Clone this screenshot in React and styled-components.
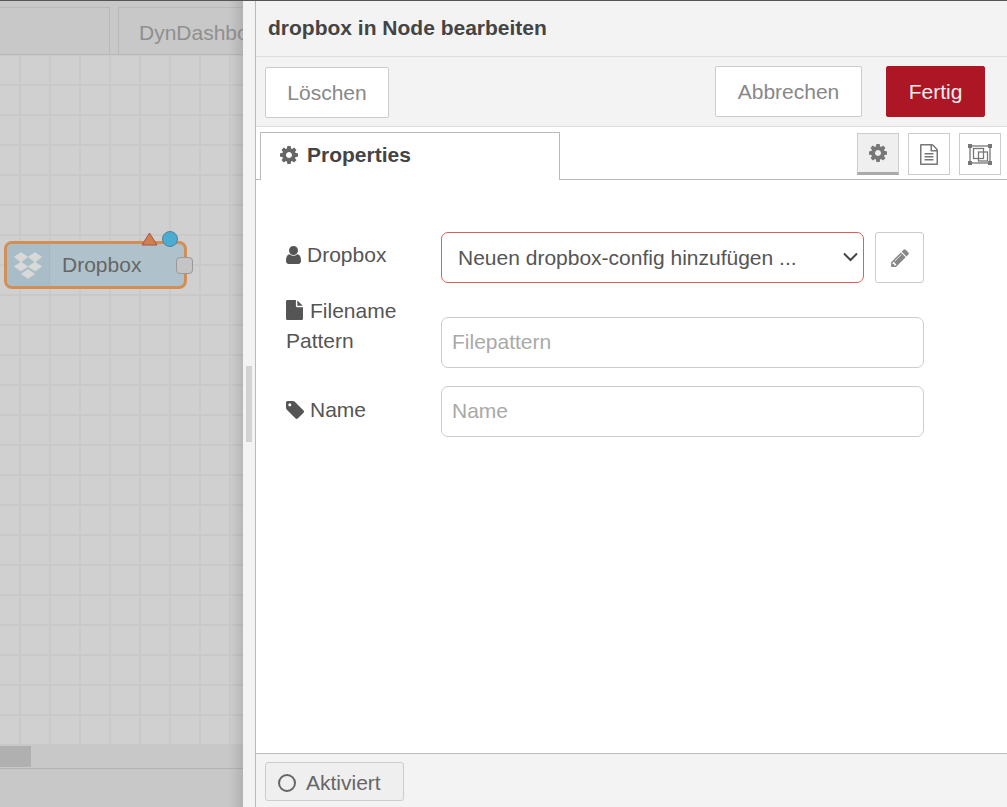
import React from 'react';
import styled, { createGlobalStyle } from 'styled-components';

const GlobalStyle = createGlobalStyle`
  html, body { margin: 0; padding: 0; height: 100%; overflow: hidden; }
  #root { height: 100%; }
  * { box-sizing: border-box; }
  body { font-family: "Liberation Sans", Arial, sans-serif; color: #555; }
`;

// font awesome 4 glyphs
const ICONS = {
  cog: ['128 128 1536 1536', 'M1152 896q0-106-75-181t-181-75-181 75-75 181 75 181 181 75 181-75 75-181zm512-109v222q0 12-8 23t-20 13l-185 28q-19 54-39 91 35 50 107 138 10 12 10 25t-9 23q-27 37-99 108t-94 71q-12 0-26-9l-138-108q-44 23-91 38-16 136-29 186-7 28-36 28h-222q-14 0-24.500-8.500t-11.500-21.500l-28-184q-49-16-90-37l-141 107q-10 9-25 9-14 0-25-11-126-114-165-168-7-10-7-23 0-12 8-23 15-21 51-66.500t54-70.500q-27-50-41-99l-183-27q-13-2-21-12.500t-8-23.500v-222q0-12 8-23t19-13l186-28q14-46 39-92-40-57-107-138-10-12-10-24 0-10 9-23 26-36 98.500-107.500t94.500-71.500q13 0 26 10l138 107q44-23 91-38 16-136 29-186 7-28 36-28h222q14 0 24.500 8.500t11.500 21.500l28 184q49 16 90 37l142-107q9-9 24-9 13 0 25 10 129 119 165 170 7 8 7 22 0 12-8 23-15 21-51 66.500t-54 70.500q26 50 41 98l183 28q13 2 21 12.500t8 23.500z'],
  user: ['256 128 1280 1536', 'M1536 1399q0 109-62.500 187t-150.500 78h-854q-88 0-150.500-78t-62.500-187q0-85 8.500-160.500t31.500-152 58.500-131 94-89 134.500-34.500q131 128 313 128t313-128q76 0 134.500 34.500t94 89 58.500 131 31.500 152 8.500 160.500zm-256-887q0 159-112.500 271.500t-271.500 112.500-271.500-112.500-112.500-271.500 112.500-271.500 271.500-112.500 271.500 112.500 112.500 271.500z'],
  file: ['128 0 1536 1792', 'M1152 512v-472q22 14 36 28l408 408q14 14 28 36h-472zm-128 32q0 40 28 68t68 28h544v1056q0 40-28 68t-68 28h-1344q-40 0-68-28t-28-68v-1600q0-40 28-68t68-28h800v544z'],
  tag: ['128 128 1515 1515', 'M576 448q0-53-37.500-90.500t-90.500-37.500-90.500 37.500-37.500 90.500 37.500 90.500 90.500 37.500 90.500-37.500 37.500-90.500zm1067 576q0 53-37 90l-491 492q-39 37-91 37-53 0-90-37l-715-716q-38-37-64.500-101t-26.500-117v-416q0-52 38-90t90-38h416q53 0 117 26.500t102 64.500l715 714q37 39 37 91z'],
  pencil: ['128 128 1515 1536', 'M491 1536l91-91-235-235-91 91v107h128v128h107zm523-928q0-22-22-22-10 0-17 7l-542 542q-7 7-7 17 0 22 22 22 10 0 17-7l542-542q7-7 7-17zm-54-192l416 416-832 832h-416v-416zm683 96q0 53-37 90l-166 166-416-416 166-165q36-38 90-38 53 0 91 38l235 234q37 39 37 91z'],
  fileText: ['128 0 1536 1792', 'M1596 380q28 28 48 76t20 88v1152q0 40-28 68t-68 28h-1344q-40 0-68-28t-28-68v-1600q0-40 28-68t68-28h896q40 0 88 20t76 48zm-444-244v376h376q-10-29-22-41l-313-313q-12-12-41-22zm384 1528v-1024h-416q-40 0-68-28t-28-68v-416h-768v1536h1280zm-1024-864q0-14 9-23t23-9h704q14 0 23 9t9 23v64q0 14-9 23t-23 9h-704q-14 0-23-9t-9-23v-64zm736 224q14 0 23 9t9 23v64q0 14-9 23t-23 9h-704q-14 0-23-9t-9-23v-64q0-14 9-23t23-9h704zm0 256q14 0 23 9t9 23v64q0 14-9 23t-23 9h-704q-14 0-23-9t-9-23v-64q0-14 9-23t23-9h704z'],
};

const Glyph = styled.svg`
  flex: none;
  fill: currentColor;
  margin-right: ${p => p.$gap || 0}px;
`;

const Icon = ({ name, w, h, gap }) => (
  <Glyph width={w} height={h} viewBox={ICONS[name][0]} $gap={gap}>
    <path d={ICONS[name][1]} />
  </Glyph>
);

const Page = styled.div`
  display: flex;
  width: 1007px;
  height: 807px;
  border-top: 1px solid #555;
  overflow: hidden;
`;

const Workspace = styled.div`
  position: relative;
  width: 243px;
  flex: none;
  display: flex;
  flex-direction: column;
  background: #c8c8c8;
  overflow: hidden;
  &::after {
    content: '';
    position: absolute;
    top: 0;
    right: 0;
    bottom: 0;
    width: 14px;
    background: linear-gradient(to right, rgba(120, 120, 120, 0), rgba(120, 120, 120, 0.28));
  }
`;

const TabBar = styled.div`
  height: 54px;
  padding-top: 6px;
  display: flex;
  gap: 8px;
  border-bottom: 1px solid #b9b9b9;
  overflow: hidden;
`;

const WorkTab = styled.div`
  flex: none;
  width: ${p => p.$width}px;
  height: 47px;
  border: 1px solid #b9b9b9;
  border-bottom: 0;
  border-left-width: ${p => (p.$cut ? 0 : 1)}px;
  padding: 13px 0 0 20px;
  font-size: 21px;
  color: #8f8f8f;
  white-space: nowrap;
`;

const Canvas = styled.div`
  position: relative;
  flex: 1;
  background-color: #d0d0d0;
  background-image:
    linear-gradient(to right, #c9c9c9 2px, transparent 2px),
    linear-gradient(to bottom, #c9c9c9 2px, transparent 2px);
  background-size: 30px 30px;
  background-position: 19px 29px;
`;

const ScrollTrack = styled.div`
  height: 25px;
  padding: 2px 0 1px;
  background: #c8c8c8;
  border-bottom: 1px solid #b2b2b2;
`;

const ScrollThumb = styled.div`
  width: 31px;
  height: 100%;
  background: #b0b0b0;
`;

const WorkFooter = styled.div`
  height: 38px;
`;

const Node = styled.div`
  position: absolute;
  left: 4px;
  top: 186px;
  width: 183px;
  height: 48px;
  display: flex;
  background: #afc2cc;
  border: 3px solid #d18f55;
  border-radius: 8px;
`;

const NodeIcon = styled.div`
  width: 43px;
  flex: none;
  display: flex;
  align-items: center;
  justify-content: center;
  background: #a9bdc8;
  border-right: 1px solid #a5b8c2;
  border-radius: 5px 0 0 5px;
`;

const NodeLabel = styled.div`
  flex: 1;
  padding: 9px 0 0 12px;
  font-size: 21px;
  color: #666;
`;

const NodePort = styled.div`
  position: absolute;
  right: -9px;
  top: 13px;
  width: 17px;
  height: 17px;
  background: #c4c4c4;
  border: 1px solid #999;
  border-radius: 4px;
`;

const NodeBadge = styled.svg`
  position: absolute;
  right: 26px;
  top: -12px;
`;

const NodeDot = styled.div`
  position: absolute;
  right: 6px;
  top: -13px;
  width: 16px;
  height: 16px;
  border-radius: 50%;
  background: #4bacd2;
  border: 1px solid #4f8296;
`;

const Tray = styled.div`
  flex: 1;
  display: flex;
  min-width: 0;
`;

const Handle = styled.div`
  width: 13px;
  flex: none;
  display: flex;
  align-items: center;
  background: #f3f3f3;
  border-right: 1px solid #bbb;
`;

const Grip = styled.div`
  width: 6px;
  height: 76px;
  margin-left: 3px;
  background: #d2d2d2;
`;

const TrayBody = styled.div`
  flex: 1;
  display: flex;
  flex-direction: column;
  min-width: 0;
  background: #fff;
`;

const TrayTitle = styled.div`
  height: 56px;
  padding: 15px 0 0 12px;
  font-size: 21px;
  font-weight: 700;
  color: #444;
  background: #f3f3f3;
  border-bottom: 1px solid #ddd;
`;

const Toolbar = styled.div`
  height: 70px;
  padding: 9px 22px 0 9px;
  display: flex;
  align-items: flex-start;
  background: #f3f3f3;
  border-bottom: 1px solid #ddd;
`;

const Button = styled.button`
  height: 51px;
  width: ${p => p.$width}px;
  margin-left: ${p => p.$left || 0}px;
  margin-top: ${p => p.$top || 0}px;
  padding: 0;
  font: inherit;
  font-size: 21px;
  color: ${p => (p.$primary ? '#eee' : '#888')};
  background: ${p => (p.$primary ? '#ad1625' : '#fff')};
  border: 1px solid ${p => (p.$primary ? '#ad1625' : '#ccc')};
  border-radius: 2px;
`;

const TabStrip = styled.div`
  height: 53px;
  padding: 5px 6px 0 4px;
  display: flex;
  background: #fff;
  border-bottom: 1px solid #bbb;
`;

const TabMain = styled.div`
  width: 300px;
  height: 48px;
  padding: 0 0 4px 19px;
  display: flex;
  align-items: center;
  gap: 9px;
  font-size: 21px;
  font-weight: 700;
  color: #444;
  background: #fff;
  border: 1px solid #bbb;
  border-bottom: 0;
  margin-bottom: -1px;
  position: relative;
  svg { color: #666; }
`;

const TabTools = styled.div`
  margin-left: auto;
  display: flex;
  gap: 9px;
  padding-top: 1px;
`;

const ToolButton = styled.div`
  width: 42px;
  height: 42px;
  display: flex;
  align-items: center;
  justify-content: center;
  color: #777;
  background: ${p => (p.$active ? '#efefef' : '#fff')};
  border: 1px solid #ccc;
  border-bottom: ${p => (p.$active ? '3px solid #aaa' : '1px solid #ccc')};
`;

const Form = styled.div`
  flex: 1;
  padding: 52px 0 0 30px;
  display: flex;
  flex-direction: column;
`;

const Row = styled.div`
  display: flex;
  align-items: flex-start;
  margin-bottom: ${p => p.$gap}px;
`;

const Label = styled.label`
  width: 155px;
  flex: none;
  padding-top: ${p => p.$top || 0}px;
  font-size: 21px;
  line-height: 30px;
  color: #555;
  svg { vertical-align: -2px; }
`;

const FieldGroup = styled.div`
  padding-top: ${p => p.$top || 0}px;
`;

const SelectBox = styled.div`
  position: relative;
  width: 423px;
  height: 51px;
  padding-left: 16px;
  display: flex;
  align-items: center;
  font-size: 21px;
  color: #555;
  white-space: nowrap;
  background: #fff;
  border: 1px solid #d6605f;
  border-radius: 7px;
`;

const SelectArrow = styled.svg`
  position: absolute;
  right: 5px;
  top: 19px;
`;

const TextInput = styled.input`
  display: block;
  width: 483px;
  height: 51px;
  padding: 0 10px 2px;
  font: inherit;
  font-size: 21px;
  color: #555;
  background: #fff;
  border: 1px solid #ccc;
  border-radius: 7px;
  &::placeholder { color: #a9a9a9; opacity: 1; }
`;

const EditButton = styled.div`
  width: 49px;
  height: 51px;
  margin-left: 11px;
  display: flex;
  align-items: center;
  justify-content: center;
  color: #888;
  border: 1px solid #ccc;
  border-radius: 3px;
`;

const Footer = styled.div`
  height: 54px;
  padding: 8px 0 0 9px;
  background: #f3f3f3;
  border-top: 1px solid #bbb;
`;

const ToggleButton = styled.div`
  width: 139px;
  height: 39px;
  padding: 2px 0 0 12px;
  display: flex;
  align-items: center;
  gap: 10px;
  font-size: 21px;
  color: #666;
  background: #efefef;
  border: 1px solid #ccc;
  border-radius: 3px;
`;

const Ring = styled.span`
  flex: none;
  width: 18px;
  height: 18px;
  border: 2px solid #666;
  border-radius: 50%;
`;

const DropboxMark = () => (
  <svg width="28" height="28" viewBox="0 0 28 28" fill="#d9d9d9" stroke="#d9d9d9" strokeWidth="1.500" strokeLinejoin="round">
    <path d="M7 2 L13 6 L7 10.500 L1 6 Z" />
    <path d="M21 2 L27 6 L21 10.500 L15 6 Z" />
    <path d="M7 11.500 L13 15.500 L7 19.500 L1 15.500 Z" />
    <path d="M21 11.500 L27 15.500 L21 19.500 L15 15.500 Z" />
    <path d="M14 19 L20 23 L14 27 L8 23 Z" />
  </svg>
);

const FrameIcon = () => (
  <svg width="24" height="21" viewBox="0 0 24 21" fill="none" stroke="#777" strokeWidth="1.300">
    <rect x="2" y="2" width="20" height="17" />
    <rect x="5.500" y="4.500" width="10" height="10" />
    <rect x="10.500" y="8" width="9" height="9" />
    <g fill="#777" stroke="none">
      <rect x="0" y="0" width="4" height="4" />
      <rect x="20" y="0" width="4" height="4" />
      <rect x="0" y="17" width="4" height="4" />
      <rect x="20" y="17" width="4" height="4" />
    </g>
  </svg>
);

export default function App() {
  return (
    <>
      <GlobalStyle />
      <Page>
        <Workspace>
          <TabBar>
            <WorkTab $width={110} $cut />
            <WorkTab $width={180}>DynDashboard</WorkTab>
          </TabBar>
          <Canvas>
            <Node>
              <NodeIcon><DropboxMark /></NodeIcon>
              <NodeLabel>Dropbox</NodeLabel>
              <NodePort />
              <NodeBadge width="17" height="14" viewBox="0 0 17 14">
                <path d="M8.500 1 L16 13 L1 13 Z" fill="#d0804f" stroke="#a8524a" />
              </NodeBadge>
              <NodeDot />
            </Node>
          </Canvas>
          <ScrollTrack><ScrollThumb /></ScrollTrack>
          <WorkFooter />
        </Workspace>
        <Tray>
          <Handle><Grip /></Handle>
          <TrayBody>
            <TrayTitle>dropbox in Node bearbeiten</TrayTitle>
            <Toolbar>
              <Button $width={124} $top={1}>Löschen</Button>
              <Button $width={147} $left={326}>Abbrechen</Button>
              <Button $width={99} $left={24} $primary>Fertig</Button>
            </Toolbar>
            <TabStrip>
              <TabMain><Icon name="cog" w={18} h={18} /> Properties</TabMain>
              <TabTools>
                <ToolButton $active><Icon name="cog" w={18} h={18} /></ToolButton>
                <ToolButton><Icon name="fileText" w={18} h={21} /></ToolButton>
                <ToolButton><FrameIcon /></ToolButton>
              </TabTools>
            </TabStrip>
            <Form>
              <Row $gap={13}>
                <Label $top={8}><Icon name="user" w={15} h={18} gap={6} />Dropbox</Label>
                <SelectBox>
                  Neuen dropbox-config hinzufügen ...
                  <SelectArrow width="15" height="10" viewBox="0 0 15 10" fill="none" stroke="#444" strokeWidth="2">
                    <path d="M1 1.500 L7.500 8 L14 1.500" />
                  </SelectArrow>
                </SelectBox>
                <EditButton><Icon name="pencil" w={18} h={18} /></EditButton>
              </Row>
              <Row $gap={18}>
                <Label><Icon name="file" w={17} h={20} gap={7} />Filename<br />Pattern</Label>
                <FieldGroup $top={21}><TextInput placeholder="Filepattern" /></FieldGroup>
              </Row>
              <Row $gap={0}>
                <Label $top={9}><Icon name="tag" w={18} h={18} gap={6} />Name</Label>
                <TextInput placeholder="Name" />
              </Row>
            </Form>
            <Footer>
              <ToggleButton><Ring />Aktiviert</ToggleButton>
            </Footer>
          </TrayBody>
        </Tray>
      </Page>
    </>
  );
}
